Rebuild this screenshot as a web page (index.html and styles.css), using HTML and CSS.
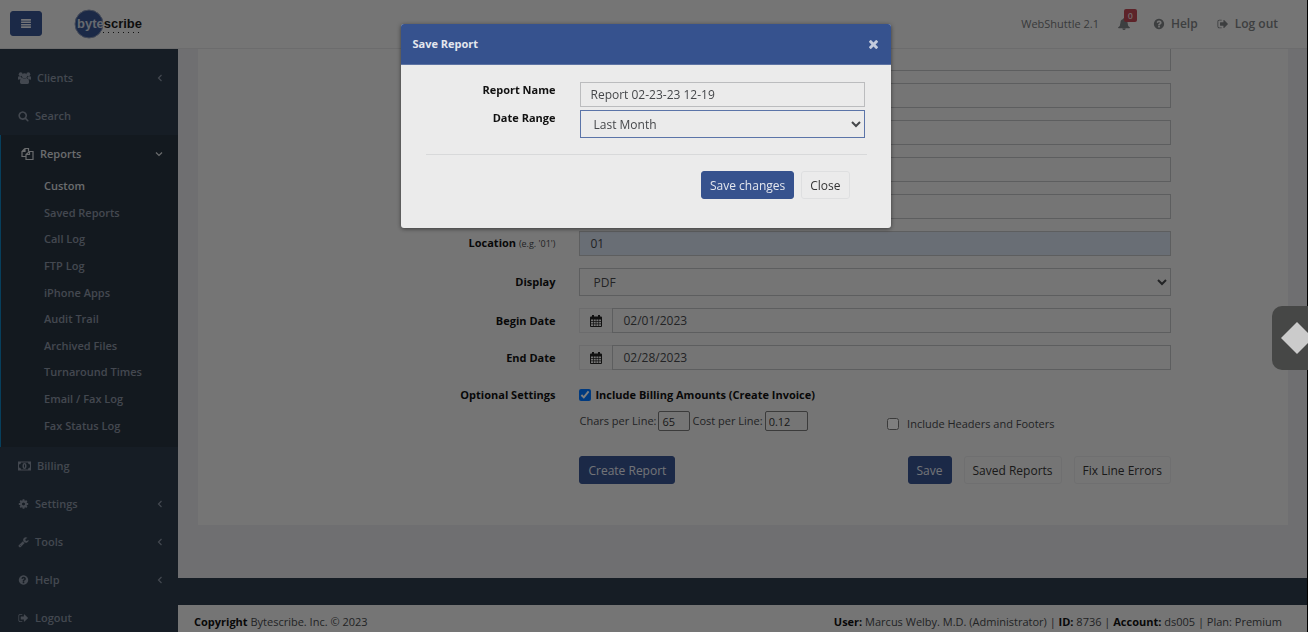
FILE: index.html
```
<!DOCTYPE html>
<html lang="en">
<head>
  <meta charset="UTF-8">
  <title>WebShuttle - Custom Reports</title>
  <link rel="stylesheet" href="styles.css">
</head>
<body>

<svg class="sprite" aria-hidden="true">
  <symbol id="bars" viewBox="0 0 12 11"><path d="M0 0h12v2H0zM0 3h12v2H0zM0 6h12v2H0zM0 9h12v2H0z"/></symbol>
  <symbol id="users" viewBox="0 0 12 11"><circle cx="2.5" cy="2" r="1.8"/><circle cx="9.5" cy="2" r="1.8"/><circle cx="6" cy="3.5" r="2.4"/><path d="M0 7V5q0-1.200 1-1.200l2 .4q.1 1.200.9 2zM12 7V5q0-1.200-1-1.200l-2 .4q-.1 1.200-.9 2zM1.800 9.500q0-3.900 2.400-3.900 1.800 1.200 3.600 0 2.400 0 2.400 3.900 0 1.500-1.500 1.500H3.300q-1.500 0-1.500-1.500z"/></symbol>
  <symbol id="search" viewBox="0 0 1792 1792"><path d="M1216 832q0-185-131.500-316.500t-316.500-131.500-316.500 131.500-131.500 316.500 131.500 316.500 316.500 131.500 316.500-131.500 131.500-316.500zm512 832q0 52-38 90t-90 38q-54 0-90-38l-343-342q-179 124-399 124-143 0-273.500-55.500t-225-150-150-225-55.500-273.500 55.500-273.500 150-225 225-150 273.500-55.500 273.500 55.500 225 150 150 225 55.500 273.500q0 220-124 399l343 343q37 37 37 90z"/></symbol>
  <symbol id="files" viewBox="0 0 12 12"><path d="M3.500.5H7v3M3.500.5L.5 3.500v5h4M3.500.5v3h-3M8 3.500h3.500v8h-7v-5zM8 3.500v3H4.500M7 3.500h1" fill="none" stroke="currentColor" stroke-width="1.200"/></symbol>
  <symbol id="money" viewBox="0 0 13 9"><path fill-rule="evenodd" d="M0 0h13v9H0zM3 1Q3 3 1 3v3q2 0 2 2h7q0-2 2-2V3q-2 0-2-2z"/><path fill-rule="evenodd" d="M6.500 1.500q2 0 2 3t-2 3-2-3 2-3zM6 3v3h1V3z"/></symbol>
  <symbol id="cog" viewBox="0 0 1792 1792"><path d="M1152 896q0-106-75-181t-181-75-181 75-75 181 75 181 181 75 181-75 75-181zm512-109v222q0 12-8 23t-20 13l-185 28q-19 54-39 91 35 50 107 138 10 12 10 25t-9 23q-27 37-99 108t-94 71q-12 0-26-9l-138-108q-44 23-91 38-16 136-29 186-7 28-36 28h-222q-14 0-24.500-8.500t-11.500-21.500l-28-184q-49-16-90-37l-141 107q-10 9-25 9-14 0-25-11-126-114-165-168-7-10-7-23 0-12 8-23 15-21 51-66.500t54-70.500q-27-50-41-99l-183-27q-13-2-21-12.500t-8-23.500v-222q0-12 8-23t19-13l186-28q14-46 39-92-40-57-107-138-10-12-10-24 0-10 9-23 26-36 98.500-107.500t94.500-71.500q13 0 26 10l138 107q44-23 91-38 16-136 29-186 7-28 36-28h222q14 0 24.500 8.500t11.500 21.500l28 184q49 16 90 37l142-107q9-9 24-9 13 0 25 10 129 119 165 170 7 8 7 22 0 12-8 23-15 21-51 66.500t-54 70.500q26 50 41 98l183 28q13 2 21 12.500t8 23.500z"/></symbol>
  <symbol id="wrench" viewBox="0 0 1792 1792"><path d="M448 1472q0-26-19-45t-45-19-45 19-19 45 19 45 45 19 45-19 19-45zm644-420l-682 682q-37 37-90 37-52 0-91-37l-106-108q-38-36-38-90 0-53 38-91l681-681q39 98 114.500 173.500t173.500 114.500zm634-435q0 39-23 106-47 134-164.500 217.500t-258.500 83.500q-185 0-316.500-131.500t-131.500-316.500 131.500-316.500 316.500-131.500q58 0 121.500 16.500t107.500 46.500q16 11 16 28t-16 28l-293 169v224l193 107q5-3 79-48.500t135.500-81 70.500-35.500q15 0 23.500 10t8.500 25z"/></symbol>
  <symbol id="question" viewBox="0 0 1792 1792"><path d="M1024 1376v-192q0-14-9-23t-23-9h-192q-14 0-23 9t-9 23v192q0 14 9 23t23 9h192q14 0 23-9t9-23zm256-672q0-88-55.500-163t-138.500-116-170-41q-243 0-371 213-15 24 8 42l132 100q7 6 19 6 16 0 25-12 53-68 86-92 34-24 86-24 48 0 85.500 26t37.500 59q0 38-20 61t-68 45q-63 28-115.500 86.500t-52.500 125.500v36q0 14 9 23t23 9h192q14 0 23-9t9-23q0-19 21.500-49.500t54.500-49.500q32-18 49-28.500t46-35 44.500-48 28-60.500 12.500-81zm384 192q0 209-103 385.500t-279.500 279.500-385.500 103-385.500-103-279.500-279.500-103-385.500 103-385.500 279.500-279.500 385.500-103 385.500 103 279.500 279.500 103 385.500z"/></symbol>
  <symbol id="signout" viewBox="0 0 1792 1792"><path d="M704 1440q0 4 1 20t.5 26.500-3 23.500-10 19.500-20.500 6.500h-320q-119 0-203.500-84.500t-84.500-203.500v-704q0-119 84.500-203.500t203.500-84.500h320q13 0 22.500 9.500t9.500 22.500q0 4 1 20t.5 26.500-3 23.500-10 19.500-20.500 6.500h-320q-66 0-113 47t-47 113v704q0 66 47 113t113 47h312l11.500 1 11.500 3 8 5.500 7 9 2 13.500zm928-544q0 26-19 45l-544 544q-19 19-45 19t-45-19-19-45v-288h-448q-26 0-45-19t-19-45v-384q0-26 19-45t45-19h448v-288q0-26 19-45t45-19 45 19l544 544q19 19 19 45z"/></symbol>
  <symbol id="bell" viewBox="0 0 12 12"><path d="M6 0q.8 0 .8 1 2.700.5 2.700 3.500 0 3.500 2.500 5 0 .8-.8.8H.8q-.8 0-.8-.8 2.500-1.500 2.500-5Q2.500 1.500 5.200 1 5.200 0 6 0zM4.300 10.500h3.400Q7.500 12 6 12t-1.700-1.500z"/></symbol>
  <symbol id="calendar" viewBox="0 0 12 12"><path fill-rule="evenodd" d="M2 0h2v1.500h4V0h2v1.500h1q1 0 1 1V11q0 1-1 1H1q-1 0-1-1V2.500q0-1 1-1h1zM1 4.500v1.700h2V4.500zM3.700 4.500v1.700h2V4.500zM6.400 4.500v1.700h2V4.500zM9.100 4.500v1.700H11V4.500zM1 6.900v1.700h2V6.900zM3.700 6.900v1.700h2V6.900zM6.400 6.900v1.700h2V6.900zM9.100 6.900v1.700H11V6.900zM1 9.300V11h2V9.300zM3.700 9.300V11h2V9.300zM6.400 9.300V11h2V9.300zM9.100 9.300V11H11V9.300z"/></symbol>
  <symbol id="times" viewBox="302 238 1188 1316"><path d="M1490 1322q0 40-28 68l-136 136q-28 28-68 28t-68-28l-294-294-294 294q-28 28-68 28t-68-28l-136-136q-28-28-28-68t28-68l294-294-294-294q-28-28-28-68t28-68l136-136q28-28 68-28t68 28l294 294 294-294q28-28 68-28t68 28l136 136q28 28 28 68t-28 68l-294 294 294 294q28 28 28 68z"/></symbol>
  <symbol id="left" viewBox="0 0 8 8"><path d="M5.500 1L2.500 4l3 3" fill="none" stroke="currentColor" stroke-width="1.200"/></symbol>
  <symbol id="down" viewBox="0 0 8 8"><path d="M1 2.500l3 3 3-3" fill="none" stroke="currentColor" stroke-width="1.200"/></symbol>
</svg>

<header class="topbar">
  <button class="btn btn-primary menu-toggle" type="button" aria-label="Toggle menu"><svg class="icon"><use href="#bars"/></svg></button>
  <svg class="logo" viewBox="0 0 70 32" role="img" aria-label="bytescribe">
    <circle cx="15" cy="16" r="14" fill="#36528e" stroke="#8894b0"/>
    <text x="3" y="20" class="logo-byte">byte<tspan class="logo-scribe">scribe</tspan></text>
    <path d="M29 24.500h38" stroke="#222" stroke-width="1" stroke-dasharray="1 4"/>
  </svg>
  <nav class="top-links">
    <span class="version">WebShuttle 2.1</span>
    <a href="#" class="alerts" aria-label="Alerts"><svg class="icon"><use href="#bell"/></svg><span class="badge">0</span></a>
    <a href="#" class="top-link"><svg class="icon"><use href="#question"/></svg>Help</a>
    <a href="#" class="top-link"><svg class="icon"><use href="#signout"/></svg>Log out</a>
  </nav>
</header>

<div class="wrapper">
  <nav class="sidebar">
    <a href="#" class="nav-item"><svg class="icon wide"><use href="#users"/></svg>Clients<svg class="arrow"><use href="#left"/></svg></a>
    <a href="#" class="nav-item"><svg class="icon"><use href="#search"/></svg>Search</a>
    <div class="nav-open">
      <a href="#" class="nav-item"><svg class="icon wide"><use href="#files"/></svg>Reports<svg class="arrow"><use href="#down"/></svg></a>
      <ul class="submenu">
        <li><a href="#" class="current">Custom</a></li>
        <li><a href="#">Saved Reports</a></li>
        <li><a href="#">Call Log</a></li>
        <li><a href="#">FTP Log</a></li>
        <li><a href="#">iPhone Apps</a></li>
        <li><a href="#">Audit Trail</a></li>
        <li><a href="#">Archived Files</a></li>
        <li><a href="#">Turnaround Times</a></li>
        <li><a href="#">Email / Fax Log</a></li>
        <li><a href="#">Fax Status Log</a></li>
      </ul>
    </div>
    <a href="#" class="nav-item"><svg class="icon wide"><use href="#money"/></svg>Billing</a>
    <a href="#" class="nav-item"><svg class="icon"><use href="#cog"/></svg>Settings<svg class="arrow"><use href="#left"/></svg></a>
    <a href="#" class="nav-item"><svg class="icon"><use href="#wrench"/></svg>Tools<svg class="arrow"><use href="#left"/></svg></a>
    <a href="#" class="nav-item"><svg class="icon"><use href="#question"/></svg>Help<svg class="arrow"><use href="#left"/></svg></a>
    <a href="#" class="nav-item"><svg class="icon"><use href="#signout"/></svg>Logout</a>
  </nav>

  <div class="page">
    <main class="content">
      <form class="report-form">
        <div class="form-row"><span></span><input class="field" type="text" aria-label="Author"></div>
        <div class="form-row"><span></span><input class="field" type="text" aria-label="Patient"></div>
        <div class="form-row"><span></span><input class="field" type="text" aria-label="Work type"></div>
        <div class="form-row"><span></span><input class="field" type="text" aria-label="Typist"></div>
        <div class="form-row"><span></span><input class="field" type="text" aria-label="Department"></div>
        <div class="form-row">
          <label for="location">Location <small>(e.g. '01')</small></label>
          <input class="field filled" type="text" id="location" value="01">
        </div>
        <div class="form-row">
          <label for="display">Display</label>
          <select class="field" id="display"><option>PDF</option></select>
        </div>
        <div class="form-row">
          <label for="begin">Begin Date</label>
          <div class="input-group">
            <span class="addon"><svg class="icon"><use href="#calendar"/></svg></span>
            <input class="field" type="text" id="begin" value="02/01/2023">
          </div>
        </div>
        <div class="form-row">
          <label for="end">End Date</label>
          <div class="input-group">
            <span class="addon"><svg class="icon"><use href="#calendar"/></svg></span>
            <input class="field" type="text" id="end" value="02/28/2023">
          </div>
        </div>
        <div class="form-row options">
          <span class="row-title">Optional Settings</span>
          <div>
            <label class="check"><input type="checkbox" checked>Include Billing Amounts (Create Invoice)</label>
            <div class="option-line">
              <div class="per-line">
                <label for="chars">Chars per Line:</label>
                <input type="text" id="chars" class="small-field" value="65">
                <label for="cost">Cost per Line:</label>
                <input type="text" id="cost" class="small-field cost" value="0.12">
              </div>
              <label class="check plain"><input type="checkbox">Include Headers and Footers</label>
            </div>
            <div class="actions">
              <button class="btn btn-primary" type="button">Create Report</button>
              <div class="actions-right">
                <button class="btn btn-primary" type="button">Save</button>
                <button class="btn" type="button">Saved Reports</button>
                <button class="btn" type="button">Fix Line Errors</button>
              </div>
            </div>
          </div>
        </div>
      </form>
    </main>
    <footer class="footer">
      <div><strong>Copyright</strong> Bytescribe. Inc. © 2023</div>
      <div><strong>User:</strong> Marcus Welby. M.D. (Administrator) | <strong>ID:</strong> 8736 | <strong>Account:</strong> ds005 | Plan: Premium</div>
    </footer>
  </div>
</div>

<div class="overlay">
  <div class="modal" role="dialog" aria-labelledby="modal-title">
    <div class="modal-header">
      <h4 id="modal-title">Save Report</h4>
      <button class="close" type="button" aria-label="Close dialog"><svg class="icon"><use href="#times"/></svg></button>
    </div>
    <form class="modal-body">
      <div class="modal-row">
        <label for="report-name">Report Name</label>
        <input class="field" type="text" id="report-name" value="Report 02-23-23 12-19">
      </div>
      <div class="modal-row">
        <label for="range">Date Range</label>
        <select class="field focused" id="range"><option>Last Month</option></select>
      </div>
      <div class="modal-actions">
        <button class="btn btn-primary" type="button">Save changes</button>
        <button class="btn" type="button">Close</button>
      </div>
    </form>
  </div>
</div>

<div class="side-tab"><svg viewBox="0 0 36 64"><path d="M25 16l16 16-16 16L9 32z"/></svg></div>

</body>
</html>
```

FILE: styles.css
```
* {
  box-sizing: border-box;
}
body {
  margin: 0;
  height: 100vh;
  overflow: hidden;
  background: #2c3b4a;
  font-family: "Open Sans", sans-serif;
  font-size: 11px;
  line-height: 16px;
  color: #45474a;
}
a {
  color: inherit;
  text-decoration: none;
}
input, select, button {
  font-family: inherit;
  margin: 0;
}
.sprite {
  display: none;
}
.icon {
  width: 12px;
  height: 12px;
  fill: currentColor;
}
.btn {
  height: 28px;
  padding: 0 8px;
  border: 1px solid #dedfe0;
  border-radius: 3px;
  background: transparent;
  color: #333;
  font-size: 12px;
}
.btn-primary {
  background: #36528e;
  border-color: #36528e;
  color: #e4e7ee;
}

/* top bar */
.topbar {
  position: fixed;
  top: 0;
  left: 0;
  right: 0;
  z-index: 1;
  height: 49px;
  padding: 0 30px 1px 10px;
  display: flex;
  align-items: center;
  background: #ebebeb;
  border-bottom: 1px solid #d8d9da;
}
.menu-toggle {
  width: 32px;
  height: 25px;
  padding: 0;
  display: flex;
  align-items: center;
  justify-content: center;
}
.menu-toggle .icon {
  width: 10px;
  height: 9px;
}
.logo {
  width: 70px;
  height: 32px;
  margin-left: 32px;
}
.logo-byte {
  font: bold 13px "Liberation Sans", sans-serif;
  fill: #cdd2de;
}
.logo-scribe {
  fill: #1c1c1c;
}
.top-links {
  margin-left: auto;
  display: flex;
  align-items: center;
  gap: 19px;
  color: #7b7e80;
}
.version {
  color: #727476;
}
.alerts {
  position: relative;
  display: flex;
  margin-right: 4px;
}
.badge {
  position: absolute;
  left: 6px;
  top: -9px;
  width: 13px;
  height: 13px;
  border-radius: 2px;
  background: #bb4652;
  color: #e0d0d2;
  font-size: 9px;
  font-weight: 600;
  line-height: 13px;
  text-align: center;
}
.top-link {
  display: flex;
  align-items: center;
  gap: 6px;
  font-size: 12px;
  font-weight: 600;
}

/* layout */
.wrapper {
  display: flex;
  min-height: 100vh;
}
.sidebar {
  flex: 0 0 178px;
  padding-top: 59px;
  color: #8790a0;
  font-weight: 600;
}
.nav-item {
  display: flex;
  align-items: center;
  height: 38px;
  padding: 0 14px 0 18px;
}
.nav-item .icon {
  width: 11px;
  margin-right: 6px;
}
.nav-item .wide {
  width: 13px;
}
.arrow {
  width: 8px;
  height: 8px;
  margin-left: auto;
}
.nav-open {
  padding-bottom: 8px;
  border-left: 1px solid #0f7fb8;
  background: #27333e;
}
.nav-open .nav-item {
  padding-left: 20px;
  padding-right: 15px;
  color: #d5d8dc;
}
.submenu {
  display: grid;
  grid-auto-rows: 1fr;
  align-items: center;
  height: 266px;
  margin: 0;
  padding: 0 0 0 43px;
  list-style: none;
}
.submenu .current {
  color: #d5d8dc;
}
.page {
  flex: 1;
  min-width: 0;
}
.content {
  padding: 46px 20px 53px;
  background: #dedfe2;
}

/* report form */
.report-form {
  display: flex;
  flex-direction: column;
  gap: 12px;
  padding: 0 117px 41px 20px;
  background: #ebebeb;
}
.form-row {
  display: grid;
  grid-template-columns: 11fr 18fr;
  align-items: center;
}
.form-row > label,
.row-title {
  padding-right: 24px;
  text-align: right;
  font-weight: 700;
  color: #111;
}
.form-row small {
  font-size: 9px;
  font-weight: 400;
  color: #45474a;
}
.field {
  width: 100%;
  height: 25px;
  padding: 0 10px;
  border: 1px solid #bbbcbe;
  border-radius: 0;
  background: #ebebeb;
  color: #45474a;
  font-size: 12px;
}
select.field {
  height: 28px;
  padding: 0 0 0 9px;
}
.filled {
  background: #d3dcea;
}
.input-group {
  display: flex;
}
.addon {
  flex: 0 0 33px;
  display: flex;
  align-items: center;
  justify-content: center;
  border: 1px solid #d8d9da;
  border-right: 0;
  color: #222;
}
.options {
  align-items: start;
}
.row-title,
.check {
  line-height: 26px;
}
.check {
  display: flex;
  align-items: center;
  gap: 4px;
  font-weight: 700;
  color: #111;
}
.check input {
  width: 12px;
  height: 12px;
}
.plain {
  gap: 8px;
  font-weight: 400;
  color: #45474a;
}
.option-line {
  display: grid;
  grid-template-columns: 52fr 48fr;
  align-items: start;
  padding-top: 3px;
}
.per-line {
  display: flex;
  align-items: center;
  gap: 2px;
}
.small-field {
  width: 32px;
  height: 20px;
  padding: 0 3px;
  border: 1px solid #767676;
  border-radius: 2px;
  background: #ebebeb;
  color: #333;
  font-size: 11px;
}
.cost {
  width: 43px;
}
.actions {
  display: flex;
  justify-content: space-between;
  margin-top: 19px;
}
.actions-right {
  display: flex;
  gap: 12px;
}
.footer {
  display: flex;
  justify-content: space-between;
  margin-top: 27px;
  padding: 9px 26px 9px 16px;
  background: #ebebeb;
}
.footer strong {
  color: #111;
}

/* save dialog */
.overlay {
  position: fixed;
  inset: 0;
  z-index: 2;
  display: flex;
  justify-content: center;
  align-items: flex-start;
  padding: 24px 16px 0 0;
  border-right: 1px solid #000;
  background: rgba(0, 0, 0, 0.5);
}
.modal {
  width: 490px;
  border-radius: 3px;
  overflow: hidden;
  background: #ebebeb;
  box-shadow: 0 1px 4px rgba(0, 0, 0, 0.5);
}
.modal-header {
  display: flex;
  align-items: center;
  justify-content: space-between;
  height: 41px;
  padding: 0 13px 0 12px;
  background: #36528e;
  border-bottom: 1px solid #5d73a3;
}
.modal-header h4 {
  margin: 0;
  font-size: 11px;
  font-weight: 700;
  color: #e4e7ee;
}
.close {
  display: flex;
  padding: 0;
  border: 0;
  background: none;
  color: #c3cbdd;
}
.close .icon {
  width: 9px;
  height: 10px;
}
.modal-body {
  padding: 17px 24px 29px 25px;
}
.modal-row {
  display: grid;
  grid-template-columns: 130px 1fr;
  column-gap: 24px;
  margin-bottom: 3px;
  padding-right: 2px;
}
.modal-row label {
  text-align: right;
  font-weight: 700;
  color: #111;
}
.focused {
  border-color: #5b74a8;
  outline: none;
}
.modal-actions {
  display: flex;
  justify-content: flex-end;
  gap: 7px;
  margin-top: 16px;
  padding: 16px 17px 0 0;
  border-top: 1px solid #d8d9da;
}

.side-tab {
  position: fixed;
  right: 0;
  top: 306px;
  z-index: 3;
  width: 36px;
  height: 64px;
  border-radius: 10px 0 0 10px;
  background: #464746;
  overflow: hidden;
}
.side-tab svg {
  display: block;
  fill: #cbcbcb;
}
```
